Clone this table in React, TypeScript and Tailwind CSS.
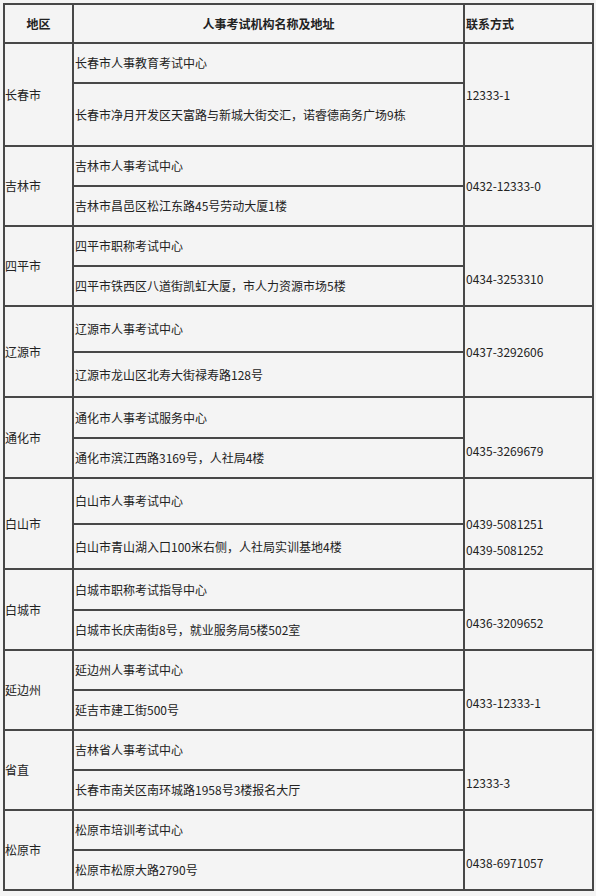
import React from "react";

type Group = {
  region: string;
  name: string;
  addr: string;
  phones: string[];
  h1: number;
  h2: number;
  phonePad?: number;
};

const groups: Group[] = [
  { region: "长春市", name: "长春市人事教育考试中心", addr: "长春市净月开发区天富路与新城大街交汇，诺睿德商务广场9栋", phones: ["12333-1"], h1: 38, h2: 61 },
  { region: "吉林市", name: "吉林市人事考试中心", addr: "吉林市昌邑区松江东路45号劳动大厦1楼", phones: ["0432-12333-0"], h1: 38, h2: 38 },
  { region: "四平市", name: "四平市职称考试中心", addr: "四平市铁西区八道街凯虹大厦，市人力资源市场5楼", phones: ["0434-3253310"], h1: 38, h2: 38, phonePad: 26 },
  { region: "辽源市", name: "辽源市人事考试中心", addr: "辽源市龙山区北寿大街禄寿路128号", phones: ["0437-3292606"], h1: 44, h2: 43 },
  { region: "通化市", name: "通化市人事考试服务中心", addr: "通化市滨江西路3169号，人社局4楼", phones: ["0435-3269679"], h1: 39, h2: 38, phonePad: 26 },
  { region: "白山市", name: "白山市人事考试中心", addr: "白山市青山湖入口100米右侧，人社局实训基地4楼", phones: ["0439-5081251", "0439-5081252"], h1: 44, h2: 43, phonePad: 26 },
  { region: "白城市", name: "白城市职称考试指导中心", addr: "白城市长庆南街8号，就业服务局5楼502室", phones: ["0436-3209652"], h1: 39, h2: 38, phonePad: 26 },
  { region: "延边州", name: "延边州人事考试中心", addr: "延吉市建工街500号", phones: ["0433-12333-1"], h1: 38, h2: 38, phonePad: 26 },
  { region: "省直", name: "吉林省人事考试中心", addr: "长春市南关区南环城路1958号3楼报名大厅", phones: ["12333-3"], h1: 38, h2: 38, phonePad: 26 },
  { region: "松原市", name: "松原市培训考试中心", addr: "松原市松原大路2790号", phones: ["0438-6971057"], h1: 38, h2: 38, phonePad: 26 },
];

const cols = "grid grid-cols-[67px_389px_127px] gap-[2px]";

export default function App() {
  return (
    <div
      className="min-h-screen bg-[#f4f4f4] pl-[3px] pt-[3px] text-[12px] leading-[20px] text-[#222]"
      style={{ fontFamily: '"Noto Sans CJK SC", "Noto Sans", sans-serif' }}
    >
      <div className="flex w-[591px] flex-col gap-[2px] bg-[#474747] p-[2px]">
        <div className={cols}>
          <div className="flex h-[37px] items-center justify-center bg-[#f4f4f4] font-bold">地区</div>
          <div className="flex h-[37px] items-center justify-center bg-[#f4f4f4] font-bold">人事考试机构名称及地址</div>
          <div className="flex h-[37px] items-center bg-[#f4f4f4] pl-[1px] font-bold">联系方式</div>
        </div>
        {groups.map((g) => (
          <div key={g.region} className={cols}>
            <div className="flex items-center bg-[#f4f4f4]">{g.region}</div>
            <div className="flex flex-col gap-[2px]">
              <div className="flex items-center bg-[#f4f4f4] pl-[1px]" style={{ height: g.h1 }}>
                {g.name}
              </div>
              <div className="flex items-center bg-[#f4f4f4] pl-[1px]" style={{ height: g.h2 }}>
                {g.addr}
              </div>
            </div>
            <div
              className="flex flex-col justify-center bg-[#f4f4f4] pl-[1px]"
              style={g.phonePad ? { paddingTop: g.phonePad } : undefined}
            >
              {g.phones.map((p) => (
                <div key={p} className={g.phones.length > 1 ? "leading-[26px]" : ""}>
                  {p}
                </div>
              ))}
            </div>
          </div>
        ))}
      </div>
    </div>
  );
}
